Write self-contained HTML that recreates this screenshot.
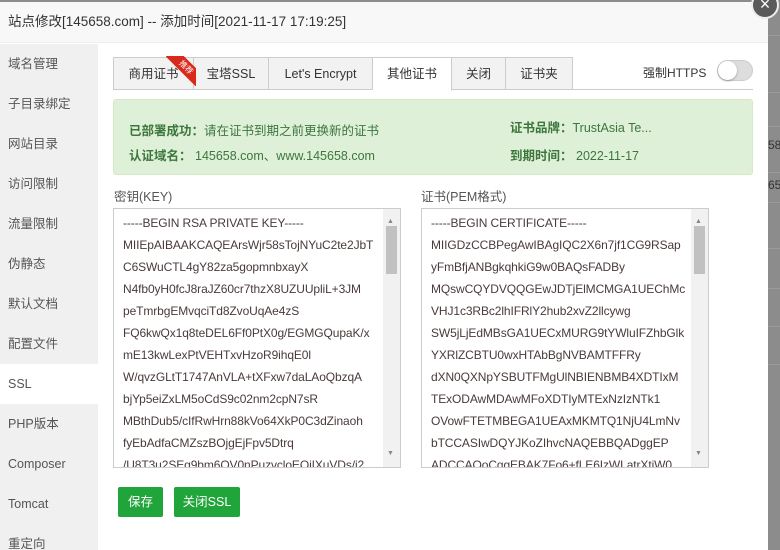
<!DOCTYPE html>
<html><head><meta charset="utf-8"><style>
*{margin:0;padding:0;box-sizing:border-box}
html,body{width:780px;height:550px;overflow:hidden}
body{background:#8c8c8c;font-family:"Liberation Sans","Noto Sans CJK SC",sans-serif;position:relative}
.dlg{position:absolute;left:0;top:2px;width:768px;height:548px;background:#fff}
.title{height:41px;background:#f8f8f8;border-bottom:1px solid #eee;font-size:13.5px;color:#333;line-height:40px;padding-left:8px}
.close{position:absolute;left:751px;top:-9px;width:28px;height:28px;border-radius:50%;background:#5a5a5a;border:2px solid #eee;color:#fff;font-size:18px;line-height:22px;text-align:center}
.side{position:absolute;left:0;top:42px;width:98px;height:520px;background:#f0f0f0}
.side div{height:40px;line-height:40px;font-size:12.5px;color:#555;padding-left:8px}
.side .on{background:#fff}
.tabs{position:absolute;left:113px;top:57px;height:33px;display:flex;border:1px solid #ccc;border-right:none;background:#f2f2f2}
.tab{border-right:1px solid #ccc;font-size:12.5px;color:#333;line-height:32px;text-align:center;position:relative}
.tabs .act{background:#fff;border-bottom:1px solid #fff;height:33px}
.line{position:absolute;left:113px;top:89px;width:640px;border-top:1px solid #ccc}
.rib{position:absolute;left:52px;top:-2px;width:30px;height:30px;overflow:hidden;display:block}
.rib span{position:absolute;left:-2px;top:5px;width:44px;height:13px;background:#d9291c;color:#fff;font-size:8px;line-height:13px;transform:rotate(45deg);text-align:center;display:block}
.https{position:absolute;left:643px;top:64px;font-size:12px;color:#333}
.tog{position:absolute;left:717px;top:60px;width:36px;height:21px;border-radius:11px;background:#ddd;border:1px solid #ccc}
.tog i{position:absolute;left:0;top:0;width:19px;height:19px;border-radius:50%;background:#fff;box-shadow:0 1px 2px rgba(0,0,0,.3)}
.ok{position:absolute;left:113px;top:99px;width:640px;height:76px;background:#dff0d8;border:1px solid #d6e9c6;border-radius:3px;color:#3c763d;font-size:12.5px}
.ok p{position:absolute;white-space:nowrap}
.ok b{font-weight:bold}
.lab{position:absolute;top:186px;font-size:12.5px;color:#555}
.ta{position:absolute;top:208px;width:288px;height:260px;border:1px solid #ccc;overflow:hidden;font-size:12px;letter-spacing:-0.1px;line-height:22px;color:#4a3a3a;padding:3px 0 0 9px;white-space:nowrap}
.sb{position:absolute;right:0;top:0;width:17px;height:100%;background:#f1f1f1}
.sb i{position:absolute;left:3px;top:17px;width:11px;height:48px;background:#c1c1c1}
.sb b{position:absolute;left:4px;font-size:7px;color:#888;font-weight:normal}
.btn{position:absolute;top:487px;height:30px;background:#20a53a;color:#fff;font-size:12.5px;line-height:30px;text-align:center;border-radius:2px}
.bgrow{position:absolute;left:768px;width:12px;border-top:1px solid #999}
</style></head><body>
<div class="bgrow" style="top:35px"></div><div class="bgrow" style="top:92px"></div><div class="bgrow" style="top:126px"></div><div class="bgrow" style="top:172px"></div><div class="bgrow" style="top:202px"></div><div class="bgrow" style="top:248px"></div><div class="bgrow" style="top:288px"></div><div class="bgrow" style="top:326px"></div><div class="bgrow" style="top:364px"></div>
<div style="position:absolute;left:768px;top:138px;font-size:12px;color:#333">58</div>
<div style="position:absolute;left:768px;top:178px;font-size:12px;color:#333">65</div>
<div class="dlg">
<div class="title">站点修改[145658.com] -- 添加时间[2021-11-17 17:19:25]</div>
<div class="side">
<div>域名管理</div><div>子目录绑定</div><div>网站目录</div><div>访问限制</div><div>流量限制</div><div>伪静态</div><div>默认文档</div><div>配置文件</div><div class="on">SSL</div><div>PHP版本</div><div>Composer</div><div>Tomcat</div><div>重定向</div>
</div>
</div>
<div class="close">×</div>
<div class="line"></div>
<div class="tabs">
<div class="tab" style="width:80px">商用证书<span class="rib"><span>推荐</span></span></div>
<div class="tab" style="width:75px">宝塔SSL</div>
<div class="tab" style="width:104px">Let's Encrypt</div>
<div class="tab act" style="width:79px">其他证书</div>
<div class="tab" style="width:54px">关闭</div>
<div class="tab" style="width:67px">证书夹</div>
</div>
<div class="https">强制HTTPS</div>
<div class="tog"><i></i></div>
<div class="ok">
<p style="left:15px;top:20px"><b>已部署成功：</b>请在证书到期之前更换新的证书</p>
<p style="left:15px;top:45px"><b>认证域名：</b> 145658.com、www.145658.com</p>
<p style="left:396px;top:17px"><b>证书品牌：</b>TrustAsia Te...</p>
<p style="left:396px;top:45px"><b>到期时间：</b> 2022-11-17</p>
</div>
<div class="lab" style="left:114px">密钥(KEY)</div>
<div class="lab" style="left:421px">证书(PEM格式)</div>
<div class="ta" style="left:113px">-----BEGIN RSA PRIVATE KEY-----<br>MIIEpAIBAAKCAQEArsWjr58sTojNYuC2te2JbT<br>C6SWuCTL4gY82za5gopmnbxayX<br>N4fb0yH0fcJ8raJZ60cr7thzX8UZUUpliL+3JM<br>peTmrbgEMvqciTd8ZvoUqAe4zS<br>FQ6kwQx1q8teDEL6Ff0PtX0g/EGMGQupaK/x<br>mE13kwLexPtVEHTxvHzoR9ihqE0l<br>W/qvzGLtT1747AnVLA+tXFxw7daLAoQbzqA<br>bjYp5eiZxLM5oCdS9c02nm2cpN7sR<br>MBthDub5/cIfRwHrn88kVo64XkP0C3dZinaoh<br>fyEbAdfaCMZszBOjgEjFpv5Dtrq<br>/U8T3u2SEq9bm6OV0nPuzvcloEQiIXuVDs/i2
<div class="sb"><i></i><b style="top:2px">▲</b><b style="bottom:2px">▼</b></div></div>
<div class="ta" style="left:421px">-----BEGIN CERTIFICATE-----<br>MIIGDzCCBPegAwIBAgIQC2X6n7jf1CG9RSap<br>yFmBfjANBgkqhkiG9w0BAQsFADBy<br>MQswCQYDVQQGEwJDTjElMCMGA1UEChMc<br>VHJ1c3RBc2lhIFRlY2hub2xvZ2llcywg<br>SW5jLjEdMBsGA1UECxMURG9tYWluIFZhbGlk<br>YXRlZCBTU0wxHTAbBgNVBAMTFFRy<br>dXN0QXNpYSBUTFMgUlNBIENBMB4XDTIxM<br>TExODAwMDAwMFoXDTIyMTExNzIzNTk1<br>OVowFTETMBEGA1UEAxMKMTQ1NjU4LmNv<br>bTCCASIwDQYJKoZIhvcNAQEBBQADggEP<br>ADCCAQoCggEBAK7Fo6+fLE6IzWLatrXtiW0
<div class="sb"><i></i><b style="top:2px">▲</b><b style="bottom:2px">▼</b></div></div>
<div class="btn" style="left:118px;width:45px">保存</div>
<div class="btn" style="left:174px;width:66px">关闭SSL</div>
</body></html>
